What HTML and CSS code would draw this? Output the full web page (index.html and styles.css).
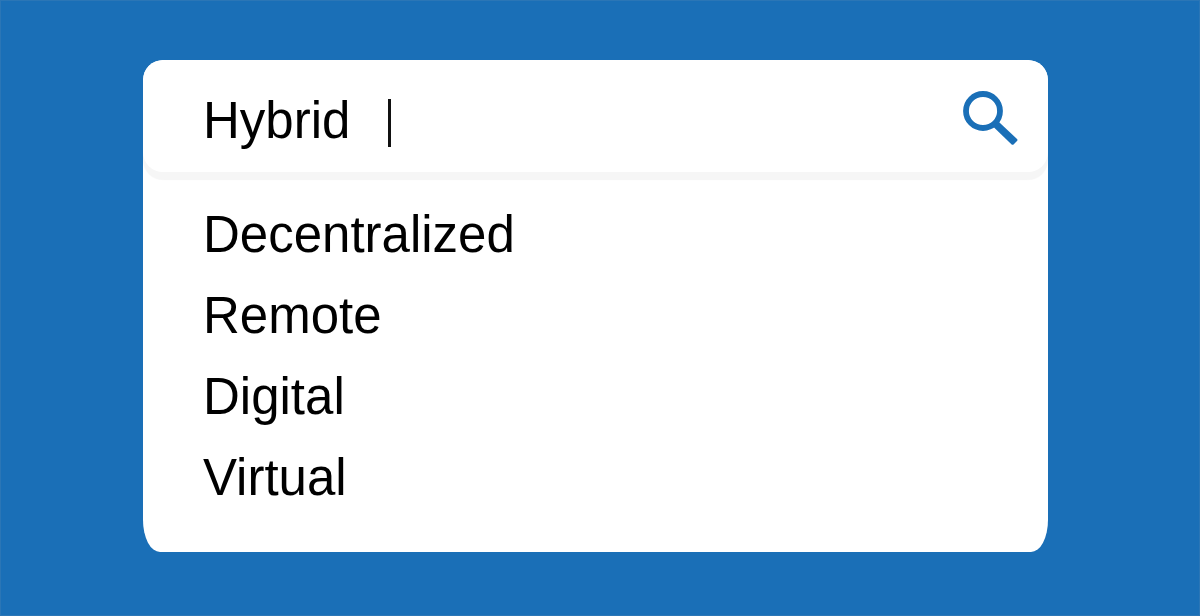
FILE: index.html
```html
<!DOCTYPE html>
<html lang="en">
<head>
  <meta charset="UTF-8">
  <title>Search</title>
  <link rel="stylesheet" href="styles.css">
</head>
<body>
  <main class="search-card">
    <form class="search-bar" role="search">
      <input class="search-input" type="text" value="Hybrid" aria-label="Search" autocomplete="off">
      <span class="caret"></span>
      <button class="search-button" type="button" aria-label="Search">
        <svg class="search-icon" viewBox="0 0 56 56">
          <circle cx="21" cy="21" r="17" fill="none" stroke="currentColor" stroke-width="5.8"/>
          <path d="M31 36.6 L36.4 31.4 L55 48.9 Q56 50 55 51.1 L51.8 54.3 Q50.6 55.4 49.4 54.3 Z" fill="currentColor"/>
        </svg>
      </button>
    </form>

    <ul class="suggestions">
      <li><a href="#">Decentralized</a></li>
      <li><a href="#">Remote</a></li>
      <li><a href="#">Digital</a></li>
      <li><a href="#">Virtual</a></li>
    </ul>
  </main>
</body>
</html>
```

FILE: styles.css
```css
* {
  box-sizing: border-box;
}

body {
  margin: 0;
  min-height: 100vh;
  padding: 59px 151px 63px 142px;
  border: 1px solid #2b76b6;
  background-color: #1a6fb7;
  color: black;
  font-family: "Liberation Sans", Arial, sans-serif;
  font-size: 51px;
}

.search-card {
  background-color: white;
  border-radius: 20px 20px 17px 17px / 20px 20px 32px 32px;
  overflow: hidden;
}

/* Search bar */
.search-bar {
  display: flex;
  align-items: center;
  height: 112px;
  padding: 0 30px 0 60px;
  background-color: white;
  border-radius: 20px;
  box-shadow: 0 8px 1px #f6f6f6;
}

.search-input {
  width: 184px;
  height: 100%;
  padding: 8px 0 0;
  border: none;
  outline: none;
  background: none;
  color: inherit;
  font: inherit;
}

.caret {
  width: 3px;
  height: 48px;
  margin-top: 14px;
  margin-left: 1px;
  background-color: #111;
}

.search-button {
  margin-left: auto;
  padding: 4px 0 0;
  border: none;
  background: none;
  color: #1a6fb7;
  cursor: pointer;
}

.search-icon {
  display: block;
  width: 56px;
  height: 56px;
}

/* Suggestions */
.suggestions {
  list-style: none;
  margin: 0;
  padding: 22px 60px 34px;
}

.suggestions li {
  line-height: 81px;
}

.suggestions a {
  color: inherit;
  text-decoration: none;
}
```
